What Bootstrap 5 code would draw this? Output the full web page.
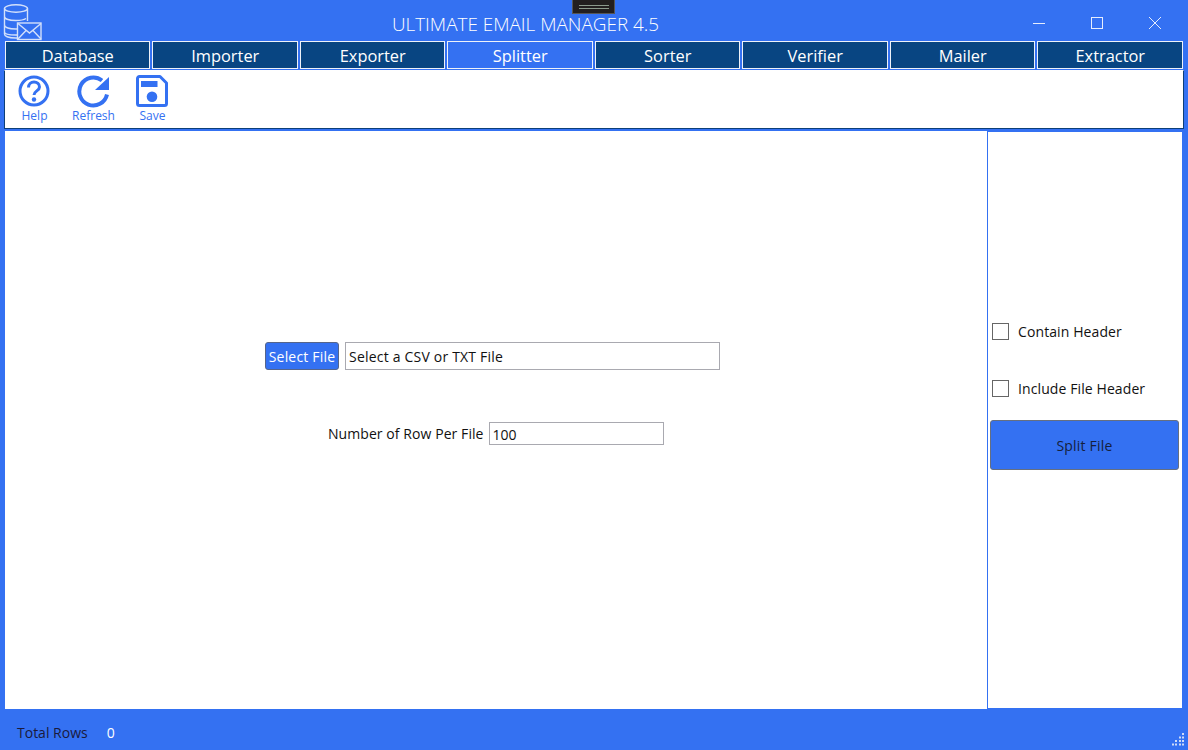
<!DOCTYPE html>
<html lang="en">
<head>
<meta charset="utf-8">
<title>Ultimate Email Manager 4.5</title>
<link href="https://cdn.jsdelivr.net/npm/bootstrap@5.3.0/dist/css/bootstrap.min.css" rel="stylesheet">
<style>
html,body{height:100%;margin:0;overflow:hidden}
body{background:#3471f2;font-family:"Open Sans","Liberation Sans",sans-serif;font-size:14px;color:#111}
.app-shell{height:750px;width:1188px;position:relative}
.title-bar{height:41px;color:#fff;position:relative}
.app-logo{margin:3px 0 0 3px;width:39px;height:38px;display:block}
.app-title{position:absolute;left:0;width:1051px;top:12px;text-align:center;font-size:18.9px;line-height:24px;font-weight:300}
.win-ctrls{position:absolute;right:4px;top:0}
.win-ctrl{width:58px;height:45px;display:flex;align-items:center;justify-content:center}
.drag-grip{position:absolute;left:572px;top:0;width:43px;height:14px;background:#231f1f;border:1px solid #555;border-top:0;display:flex;flex-direction:column;gap:2px;align-items:center;justify-content:center}
.drag-grip i{display:block;width:30px;height:1px;background:#8c9a8c}
.tab-strip{display:grid;grid-template-columns:repeat(8,1fr);grid-template-rows:28px;padding:0 4px;height:28px}
.tab-item{background:#084582;border:1.5px solid #eef2f9;margin:0 1.5px 0 .5px;padding-left:1px;color:#fff;font-size:16.4px;line-height:27px;text-align:center;height:28px}
.tab-item.is-on{background:#3471f2}
.tool-strip{margin:1px 4px 0;height:59px;background:#fff;border:1px solid #0d3f78;border-top-color:#fff;padding:2px 0 0 0}
.tool-btn{color:#3471f2;font-size:12px;line-height:16px;text-align:center;width:59px}
.tool-btn svg{display:block;margin:1px auto 0;width:34px;height:34px}
.work-row{margin:2px 5px 0;height:578px}
.work-main{background:#fff;flex:1 1 auto;position:relative}
.work-side{width:196px;flex:none;background:#fff;border:1px solid #3471f2;padding:0 3px 0 2px}
.pick-btn{background:#3471f2;border:1px solid #56658a;border-radius:3px;color:#fff;width:74px;height:28px;font-size:14px;line-height:28px;padding:0;text-align:center;letter-spacing:.2px}
.path-box{border:1px solid #a9a9b0;width:375px;height:28px;font-size:14px;line-height:28px;padding:0 3px;letter-spacing:.2px;background:#fff}
.row-box{border:1px solid #a9a9b0;width:175px;height:23px;font-size:14px;line-height:24px;padding:0 3px;background:#fff}
.pick-line{position:absolute;left:260px;top:211px;gap:6px}
.count-line{position:absolute;left:323px;top:291px;gap:5px}
.count-line span{letter-spacing:.07px}
.side-check{height:17px;font-size:14px;letter-spacing:.1px;gap:9px;margin-left:2px;line-height:17px}
.side-check b{display:block;width:17px;height:17px;border:1px solid #666;background:#fff;font-weight:400}
.split-btn{background:#3471f2;border:1px solid #666f80;border-radius:3px;height:50px;line-height:50px;text-align:center;width:189px;font-size:14px;color:#14203c;letter-spacing:.2px}
.gap-first{margin-top:191px}
.gap-second{margin-top:40px}
.gap-third{margin-top:23px}
.status-bar{height:41px;position:relative;padding-left:17px;line-height:47px;font-size:14px;color:#1a1a3c}
.status-bar em{font-style:normal;color:#fff;margin-left:19px}
.resize-dots{position:absolute;right:3px;bottom:3px;width:14px;height:14px}
</style>
</head>
<body>
<div class="app-shell d-flex flex-column">
  <div class="title-bar">
    <svg class="app-logo" viewBox="0 0 39 38" fill="none" stroke="#d3e0fb" stroke-width="1.4">
      <ellipse cx="13" cy="5.5" rx="11.5" ry="3.8"/>
      <path d="M1.5 5.5V31c0 2.400 5 4 11.500 4H14M24.500 5.500V18M1.500 13.500c0 2.400 5 4 11.500 4 4 0 8-.7 10-2M1.500 22c0 2.400 5 4 11.500 4h1M1.500 29c0 2 5 3 11.500 3h1"/>
      <rect x="14.500" y="20" width="23.500" height="16.500"/>
      <path d="M15 20.500l11.500 9.500 11.500-9.500M15 36l8.500-9M38 36l-8.500-9"/>
    </svg>
    <div class="app-title">ULTIMATE EMAIL MANAGER 4.5</div>
    <div class="win-ctrls d-flex">
      <div class="win-ctrl"><svg width="14" height="14" viewBox="0 0 14 14" stroke="#e6edfd" fill="none"><path d="M1 7.500h12"/></svg></div>
      <div class="win-ctrl"><svg width="14" height="14" viewBox="0 0 14 14" stroke="#e6edfd" fill="none"><rect x="1.500" y="1.500" width="11" height="11"/></svg></div>
      <div class="win-ctrl"><svg width="14" height="14" viewBox="0 0 14 14" stroke="#e6edfd" fill="none"><path d="M1 1l12 12M13 1L1 13"/></svg></div>
    </div>
    <div class="drag-grip"><i></i><i></i></div>
  </div>
  <div class="tab-strip">
    <div class="tab-item">Database</div>
    <div class="tab-item">Importer</div>
    <div class="tab-item">Exporter</div>
    <div class="tab-item is-on">Splitter</div>
    <div class="tab-item">Sorter</div>
    <div class="tab-item">Verifier</div>
    <div class="tab-item">Mailer</div>
    <div class="tab-item">Extractor</div>
  </div>
  <div class="tool-strip d-flex">
    <div class="tool-btn">
      <svg viewBox="1 0 34 34" fill="none" stroke="#3471f2" stroke-width="3">
        <circle cx="17" cy="17" r="14"/>
        <path d="M11.500 13.500c0-3.200 2.400-5.500 5.500-5.500s5.500 2.200 5.500 5c0 4-5.500 3.800-5.500 8"/>
        <circle cx="17" cy="25.500" r="2.200" fill="#3471f2" stroke="none"/>
      </svg>Help</div>
    <div class="tool-btn">
      <svg viewBox="1 0 34 34" fill="none" stroke="#3471f2" stroke-width="4">
        <path d="M31 20.500A14 14 0 1 1 26 6.500"/>
        <path d="M33 3V16H19z" fill="#3471f2" stroke="none"/>
      </svg>Refresh</div>
    <div class="tool-btn">
      <svg viewBox="1 0 34 34">
        <path fill="none" stroke="#3471f2" stroke-width="3" stroke-linejoin="round" d="M4.500 2.500H25L31.500 9V29.500a2 2 0 0 1-2 2H4.500a2 2 0 0 1-2-2v-25a2 2 0 0 1 2-2z"/>
        <rect x="6" y="7" width="16.500" height="6" fill="#3471f2"/>
        <circle cx="17" cy="22.700" r="5.300" fill="#3471f2"/>
      </svg>Save</div>
  </div>
  <div class="work-row d-flex">
    <div class="work-main">
      <div class="pick-line d-flex align-items-center">
        <div class="pick-btn">Select File</div>
        <div class="path-box">Select a CSV or TXT File</div>
      </div>
      <div class="count-line d-flex align-items-center">
        <span>Number of Row Per File</span>
        <div class="row-box">100</div>
      </div>
    </div>
    <div class="work-side d-flex flex-column">
      <div class="side-check d-flex align-items-center gap-first"><b></b>Contain Header</div>
      <div class="side-check d-flex align-items-center gap-second"><b></b>Include File Header</div>
      <div class="split-btn gap-third">Split File</div>
    </div>
  </div>
  <div class="status-bar">Total Rows<em>0</em>
    <svg class="resize-dots" viewBox="0 0 14 14" fill="#cfdcf8">
      <rect x="11" y="0" width="2" height="2"/><rect x="8" y="3.500" width="2" height="2"/><rect x="11" y="3.500" width="2" height="2"/>
      <rect x="4" y="7" width="2" height="2"/><rect x="8" y="7" width="2" height="2"/><rect x="11" y="7" width="2" height="2"/>
      <rect x="1" y="10.500" width="2" height="2"/><rect x="4" y="10.500" width="2" height="2"/><rect x="8" y="10.500" width="2" height="2"/><rect x="11" y="10.500" width="2" height="2"/>
    </svg>
  </div>
</div>
</body>
</html>
